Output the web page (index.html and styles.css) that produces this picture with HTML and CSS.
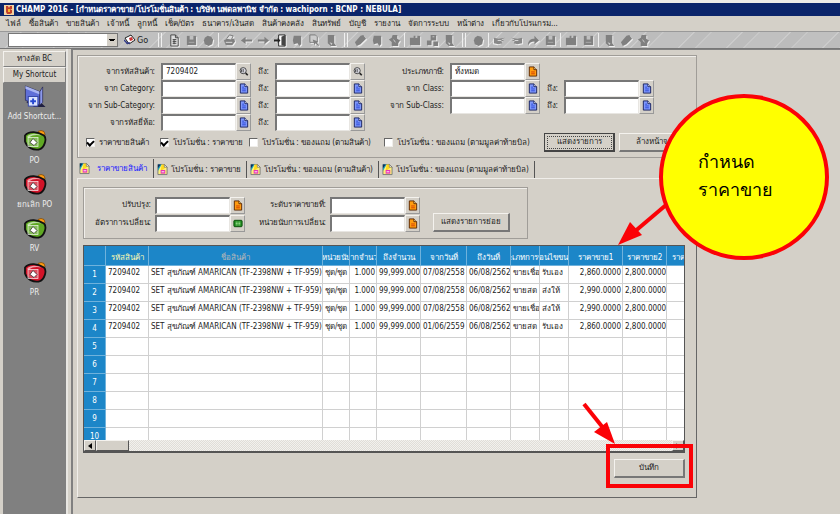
FILE: index.html
```html
<!DOCTYPE html>
<html lang="th">
<head>
<meta charset="UTF-8">
<title>CHAMP 2016</title>
<link rel="stylesheet" href="styles.css">
</head>
<body>

<svg class="defs" width="0" height="0">
  <symbol id="i-doc" viewBox="0 0 10 12"><path d="M1 1h5l3 3v7H1z" fill="#7f98fa" stroke="#16205e"/><path d="M6 1v3h3" fill="#fff" stroke="#16205e"/><path d="M3 4.500h2M3 6.500h4M3 8.500h4" stroke="#2b47d8"/></symbol>
  <symbol id="i-orange" viewBox="0 0 10 12"><path d="M1 1h5l3 3v7H1z" fill="#ff9c10" stroke="#5a2500"/><path d="M6 1v3h3" fill="#ffe9a0" stroke="#5a2500"/><path d="M3 6.500h4M3 8.500h4" stroke="#d13c00"/></symbol>
  <symbol id="i-green" viewBox="0 0 10 12"><rect x=".5" y="2.500" width="9" height="7" rx="1" fill="#1d8a1d" stroke="#0b4b0b"/><path d="M2.500 4.500h5M2.500 6h5M2.500 7.500h5" stroke="#b5f0a5" stroke-dasharray="1.200 .7"/></symbol>
  <symbol id="i-find" viewBox="0 0 12 12"><circle cx="5" cy="5" r="3.700" fill="#d8d8e0" stroke="#333"/><path d="M3 3.500v3M5 3v4" stroke="#333"/><path d="M8 8l2.500 2.500" stroke="#222" stroke-width="2"/></symbol>
  <symbol id="i-tab" viewBox="0 0 12 13"><path d="M1 1h7l3 3v8H1z" fill="#fff27a" stroke="#777"/><path d="M1 1h4L1 8z" fill="#18a0b8"/><path d="M1 1h3L1 5z" fill="#0c2c60"/><path d="M5 1h3l2 3-6 4z" fill="#ffd91c"/><path d="M8 1l3 3H8z" fill="#fff" stroke="#555" stroke-width=".6"/><rect x="4" y="7" width="5" height="4" fill="#e834b8"/><path d="M5 9h3" stroke="#fff"/></symbol>
  <symbol id="i-champ" viewBox="0 0 10 10"><rect width="10" height="10" fill="#f3d2a0"/><path d="M2 1h2l1 2 1-2h2v3L6 5h2v3L6 9H3L2 7z" fill="#c2402a"/><path d="M4 4h2v3H4z" fill="#f6b42c"/></symbol>
  <symbol id="i-go" viewBox="0 0 12 12"><path d="M1 4l6-3 4 5-6 4z" fill="#fff" stroke="#222"/><path d="M5 4l3-1 1 3-3 1z" fill="#c33"/><path d="M0 6l4 4M2 9h4" stroke="#303a88" stroke-width="1.400"/></symbol>
  <symbol id="i-shortcut" viewBox="0 0 24 24"><path d="M17 7l2-3v15l4 4H11l-8-5z" fill="#1f1f40"/><path d="M2 1l15 6v14L2 16z" fill="#5f6fd8" stroke="#22224c" stroke-width=".7"/><path d="M2 1l15 6v3L2 4z" fill="#a9b5f2"/><path d="M17 7l3-5v16l-3 3z" fill="#8b98ec" stroke="#22224c" stroke-width=".7"/><rect x="5" y="12" width="10" height="10" fill="#dbe4ff" stroke="#3446a8"/><path d="M10 14v6M7 17h6" stroke="#2547d0" stroke-width="2"/></symbol>
  <symbol id="i-bag" viewBox="0 0 24 22"><circle cx="18" cy="5" r="4" fill="#ff9d12" stroke="#5a3000" stroke-width=".6"/><path d="M2 6c4-5 13-4 19 0 3 3 1 12-5 14-6 1-12-2-14-8z" fill="currentColor" stroke="#111" stroke-width="1.800"/><path d="M4 7c4-4 11-3 14-1-3-1-9-1-12 2z" fill="#fff" opacity=".6"/><rect x="5" y="8" width="10" height="9" fill="#fff" fill-opacity=".25" stroke="#fff" stroke-opacity=".8" stroke-width=".8"/><path d="M7 13l3-4 4 4-3 3z" fill="#fff" stroke="#222" stroke-width=".7"/></symbol>
  <symbol id="t-page" viewBox="0 0 14 14"><path d="M3 1h5l3 3v9H3z" fill="#ddd" stroke="#444"/><path d="M8 1v3h3M5 6h4M5 8h4M5 10h4M6.500 6v5" fill="none" stroke="#444"/></symbol>
  <symbol id="t-save" viewBox="0 0 14 14"><path d="M2 2h10v10H2z" fill="#808080"/><path d="M5 2h4v4H5z" fill="#c0c0c0"/><path d="M4 9h6" stroke="#aaa"/></symbol>
  <symbol id="t-ball" viewBox="0 0 14 14"><path d="M3 4l3-2 4 1 2 3-1 5-4 2-4-2-1-4z" fill="#808080"/></symbol>
  <symbol id="t-print" viewBox="0 0 14 14"><path d="M1 7l3-2h8l1 3-3 4H3z" fill="#808080"/><path d="M4 5l3-4 4 1-2 4" fill="#ddd" stroke="#777"/><path d="M3 9h7" stroke="#ddd"/></symbol>
  <symbol id="t-left" viewBox="0 0 14 14"><path d="M1 7l5-4v3h7v2H6v3z" fill="#808080"/></symbol>
  <symbol id="t-right" viewBox="0 0 14 14"><path d="M13 7L8 3v3H1v2h7v3z" fill="#808080"/></symbol>
  <symbol id="t-door" viewBox="0 0 14 14"><path d="M5 1h7v12H5z" fill="#fff" stroke="#222"/><path d="M8 3l4-2v12l-4-1z" fill="#444"/><path d="M0 6h4V4l3 3-3 3V8H0z" fill="#222"/></symbol>
  <symbol id="t-tag" viewBox="0 0 14 14"><path d="M3 2h8v9l-2 2-2-3-4 1-1-4z" fill="#808080"/></symbol>
  <symbol id="t-copy" viewBox="0 0 14 14"><path d="M2 1h6l2 2v6H2z" fill="#ccc" stroke="#777"/><path d="M5 6l6 2-2 1 3 3-1 1-3-3-1 2z" fill="#808080"/></symbol>
  <symbol id="t-note" viewBox="0 0 14 14"><path d="M3 1h7v9l2 3H6l-3-3z" fill="#808080"/><path d="M5 9l3 1-1 2z" fill="#ccc"/></symbol>
  <symbol id="t-pen" viewBox="0 0 14 14"><path d="M1 9l6-7 3-1 3 4-6 6-4 2z" fill="#808080"/></symbol>
  <symbol id="t-man" viewBox="0 0 14 14"><path d="M5 1h5v4l3 2-2 3v3H4V9L1 6l3-2z" fill="#808080"/><path d="M6 6l2 3" stroke="#ccc"/></symbol>
  <symbol id="t-box" viewBox="0 0 14 14"><path d="M1 4h4V2h2v2h2V2h3v10H1z" fill="#808080"/></symbol>
  <symbol id="t-tree" viewBox="0 0 14 14"><path d="M5 1h6v6H5zM1 7h5v5H1zM8 8h5v5H8z" fill="#808080"/><path d="M7 3h2" stroke="#ccc"/></symbol>
  <symbol id="t-hand" viewBox="0 0 14 14"><path d="M1 4l7 1 5-1v6l-5 1-4-1 1-2-3-1 3-1z" fill="#888"/><path d="M5 7h4" stroke="#ddd"/></symbol>
  <symbol id="t-jump" viewBox="0 0 14 14"><path d="M1 12c0-5 3-7 7-7V2l5 5-5 4V8c-3 0-5 1-7 4z" fill="#808080"/></symbol>
</svg>

<header class="titlebar">
  <svg class="title-icon"><use href="#i-champ"/></svg>
  <h1>CHAMP 2016 - [กำหนดราคาขาย/โปรโมชั่นสินค้า : บริษัท นพดลพานิช จำกัด : wachiporn : BCNP : NEBULA]</h1>
</header>

<nav class="menubar">
  <a href="#">ไฟล์</a><a href="#">ซื้อสินค้า</a><a href="#">ขายสินค้า</a><a href="#">เจ้าหนี้</a><a href="#">ลูกหนี้</a><a href="#">เช็ค/บัตร</a><a href="#">ธนาคาร/เงินสด</a><a href="#">สินค้าคงคลัง</a><a href="#">สินทรัพย์</a><a href="#">บัญชี</a><a href="#">รายงาน</a><a href="#">จัดการระบบ</a><a href="#">หน้าต่าง</a><a href="#">เกี่ยวกับโปรแกรม...</a>
</nav>

<div class="toolbar">
  <select class="combo" aria-label="Go"><option></option></select>
  <button class="go"><svg><use href="#i-go"/></svg>Go</button>
  <i class="sep wide"></i>
  <button class="tool"><svg><use href="#t-page"/></svg></button>
  <button class="tool"><svg><use href="#t-save"/></svg></button>
  <button class="tool"><svg><use href="#t-ball"/></svg></button>
  <i class="sep"></i>
  <button class="tool"><svg><use href="#t-print"/></svg></button>
  <button class="tool"><svg><use href="#t-left"/></svg></button>
  <button class="tool"><svg><use href="#t-right"/></svg></button>
  <button class="tool"><svg><use href="#t-door"/></svg></button>
  <button class="tool"><svg><use href="#t-tag"/></svg></button>
  <button class="tool"><svg><use href="#t-copy"/></svg></button>
  <button class="tool"><svg><use href="#t-note"/></svg></button>
  <i class="sep wide"></i>
  <button class="tool"><svg><use href="#t-pen"/></svg></button>
  <button class="tool"><svg><use href="#t-tag"/></svg></button>
  <button class="tool"><svg><use href="#t-man"/></svg></button>
  <i class="sep"></i>
  <button class="tool"><svg><use href="#t-box"/></svg></button>
  <button class="tool"><svg><use href="#t-tree"/></svg></button>
  <button class="tool"><svg><use href="#t-note"/></svg></button>
  <i class="sep wide"></i>
  <button class="tool"><svg><use href="#t-ball"/></svg></button>
  <i class="sep"></i>
  <button class="tool"><svg class="flip"><use href="#t-hand"/></svg></button>
  <button class="tool"><svg><use href="#t-hand"/></svg></button>
  <button class="tool"><svg><use href="#t-jump"/></svg></button>
  <button class="tool"><svg><use href="#t-save"/></svg></button>
  <i class="sep"></i>
  <button class="tool"><svg><use href="#t-box"/></svg></button>
  <button class="tool"><svg><use href="#t-save"/></svg></button>
  <i class="sep"></i>
  <button class="tool"><svg><use href="#t-note"/></svg></button>
  <button class="tool"><svg><use href="#t-pen"/></svg></button>
  <button class="tool"><svg><use href="#t-man"/></svg></button>
</div>

<div class="workspace">
  <aside class="sidebar">
    <button class="side-head">ทางลัด BC</button>
    <button class="side-head">My Shortcut</button>
    <div class="shortcuts">
      <a href="#"><svg><use href="#i-shortcut"/></svg>Add Shortcut...</a>
      <a href="#"><svg class="green"><use href="#i-bag"/></svg>PO</a>
      <a href="#"><svg class="red"><use href="#i-bag"/></svg>ยกเลิก PO</a>
      <a href="#"><svg class="green"><use href="#i-bag"/></svg>RV</a>
      <a href="#"><svg class="red"><use href="#i-bag"/></svg>PR</a>
    </div>
  </aside>

  <main class="window">
    <section class="group filters">
      <div class="filter-grid">
        <label for="item1">จากรหัสสินค้า:</label>
        <div class="field"><input id="item1" type="text" value="7209402"><button><svg><use href="#i-find"/></svg></button></div>
        <label for="item2">ถึง:</label>
        <div class="field"><input id="item2" type="text"><button><svg><use href="#i-find"/></svg></button></div>
        <label for="tax">ประเภทภาษี:</label>
        <div class="field"><input id="tax" type="text" value="ทั้งหมด"><button><svg><use href="#i-orange"/></svg></button></div>
        <span></span><span></span>

        <label for="cat1">จาก Category:</label>
        <div class="field"><input id="cat1" type="text"><button><svg><use href="#i-doc"/></svg></button></div>
        <label for="cat2">ถึง:</label>
        <div class="field"><input id="cat2" type="text"><button><svg><use href="#i-doc"/></svg></button></div>
        <label for="class1">จาก Class:</label>
        <div class="field"><input id="class1" type="text"><button><svg><use href="#i-doc"/></svg></button></div>
        <label for="class2">ถึง:</label>
        <div class="field"><input id="class2" type="text"><button><svg><use href="#i-doc"/></svg></button></div>

        <label for="sub1">จาก Sub-Category:</label>
        <div class="field"><input id="sub1" type="text"><button><svg><use href="#i-doc"/></svg></button></div>
        <label for="sub2">ถึง:</label>
        <div class="field"><input id="sub2" type="text"><button><svg><use href="#i-doc"/></svg></button></div>
        <label for="subc1">จาก Sub-Class:</label>
        <div class="field"><input id="subc1" type="text"><button><svg><use href="#i-doc"/></svg></button></div>
        <label for="subc2">ถึง:</label>
        <div class="field"><input id="subc2" type="text"><button><svg><use href="#i-doc"/></svg></button></div>

        <label for="brand1">จากรหัสยี่ห้อ:</label>
        <div class="field"><input id="brand1" type="text"><button><svg><use href="#i-doc"/></svg></button></div>
        <label for="brand2">ถึง:</label>
        <div class="field"><input id="brand2" type="text"><button><svg><use href="#i-doc"/></svg></button></div>
      </div>
      <div class="checks">
        <label><input type="checkbox" checked>ราคาขายสินค้า</label>
        <label><input type="checkbox" checked>โปรโมชั่น : ราคาขาย</label>
        <label><input type="checkbox">โปรโมชั่น : ของแถม (ตามสินค้า)</label>
        <label><input type="checkbox">โปรโมชั่น : ของแถม (ตามมูลค่าท้ายบิล)</label>
        <div class="check-actions">
          <button class="btn default">แสดงรายการ</button>
          <button class="btn">ล้างหน้าจอ</button>
        </div>
      </div>
    </section>

    <div class="tabs">
      <button class="tab active"><svg><use href="#i-tab"/></svg>ราคาขายสินค้า</button>
      <button class="tab"><svg><use href="#i-tab"/></svg>โปรโมชั่น : ราคาขาย</button>
      <button class="tab"><svg><use href="#i-tab"/></svg>โปรโมชั่น : ของแถม (ตามสินค้า)</button>
      <button class="tab"><svg><use href="#i-tab"/></svg>โปรโมชั่น : ของแถม (ตามมูลค่าท้ายบิล)</button>
    </div>

    <section class="tab-page">
      <div class="group options">
        <div class="option-grid">
          <label for="adj">ปรับปรุง:</label>
          <div class="field"><input id="adj" type="text"><button><svg><use href="#i-orange"/></svg></button></div>
          <label for="level">ระดับราคาขายที่:</label>
          <div class="field"><input id="level" type="text"><button><svg><use href="#i-orange"/></svg></button></div>
          <label for="rate">อัตราการเปลี่ยน:</label>
          <div class="field"><input id="rate" type="text"><button><svg><use href="#i-green"/></svg></button></div>
          <label for="unit">หน่วยนับการเปลี่ยน:</label>
          <div class="field"><input id="unit" type="text"><button><svg><use href="#i-orange"/></svg></button></div>
        </div>
        <button class="btn detail">แสดงรายการย่อย</button>
      </div>

      <div class="sheet">
        <div class="sheet-view">
          <table>
            <colgroup><col class="c-no"><col class="c-code"><col class="c-name"><col class="c-unit"><col class="c-unit"><col class="c-money"><col class="c-date"><col class="c-money"><col class="c-type"><col class="c-type"><col class="c-price"><col class="c-money"><col class="c-date"></colgroup>
            <thead>
              <tr><th></th><th class="hot"><span>รหัสสินค้า</span></th><th class="dim"><span>ชื่อสินค้า</span></th><th><span>หน่วยนับ</span></th><th><span>จากจำนวน</span></th><th><span>ถึงจำนวน</span></th><th><span>จากวันที่</span></th><th><span>ถึงวันที่</span></th><th><span>ประเภทการขาย</span></th><th><span>เงื่อนไขขนส่ง</span></th><th><span>ราคาขาย1</span></th><th><span>ราคาขาย2</span></th><th><span>ราคาขาย3</span></th></tr>
            </thead>
            <tbody>
              <tr><th>1</th><td>7209402</td><td>SET สุขภัณฑ์ AMARICAN (TF-2398NW + TF-959)</td><td>ชุด/ชุด</td><td class="num">1.000</td><td class="num">99,999.000</td><td>07/08/2558</td><td>06/08/2562</td><td>ขายเชื่อ</td><td>รับเอง</td><td class="num">2,860.0000</td><td>2,800.0000</td><td></td></tr>
              <tr><th>2</th><td>7209402</td><td>SET สุขภัณฑ์ AMARICAN (TF-2398NW + TF-959)</td><td>ชุด/ชุด</td><td class="num">1.000</td><td class="num">99,999.000</td><td>07/08/2558</td><td>06/08/2562</td><td>ขายสด</td><td>ส่งให้</td><td class="num">2,990.0000</td><td>2,800.0000</td><td></td></tr>
              <tr><th>3</th><td>7209402</td><td>SET สุขภัณฑ์ AMARICAN (TF-2398NW + TF-959)</td><td>ชุด/ชุด</td><td class="num">1.000</td><td class="num">99,999.000</td><td>07/08/2558</td><td>06/08/2562</td><td>ขายเชื่อ</td><td>ส่งให้</td><td class="num">2,990.0000</td><td>2,800.0000</td><td></td></tr>
              <tr><th>4</th><td>7209402</td><td>SET สุขภัณฑ์ AMARICAN (TF-2398NW + TF-959)</td><td>ชุด/ชุด</td><td class="num">1.000</td><td class="num">99,999.000</td><td>01/06/2559</td><td>06/08/2562</td><td>ขายสด</td><td>รับเอง</td><td class="num">2,860.0000</td><td>2,800.0000</td><td></td></tr>
              <tr><th>5</th><td></td><td></td><td></td><td></td><td></td><td></td><td></td><td></td><td></td><td></td><td></td><td></td></tr>
              <tr><th>6</th><td></td><td></td><td></td><td></td><td></td><td></td><td></td><td></td><td></td><td></td><td></td><td></td></tr>
              <tr><th>7</th><td></td><td></td><td></td><td></td><td></td><td></td><td></td><td></td><td></td><td></td><td></td><td></td></tr>
              <tr><th>8</th><td></td><td></td><td></td><td></td><td></td><td></td><td></td><td></td><td></td><td></td><td></td><td></td></tr>
              <tr><th>9</th><td></td><td></td><td></td><td></td><td></td><td></td><td></td><td></td><td></td><td></td><td></td><td></td></tr>
              <tr><th>10</th><td></td><td></td><td></td><td></td><td></td><td></td><td></td><td></td><td></td><td></td><td></td><td></td></tr>
            </tbody>
          </table>
        </div>
        <div class="scrollbar">
          <button class="arrow" aria-label="left"><svg viewBox="0 0 6 6"><path d="M5 0v6L1 3z"/></svg></button>
          <i class="thumb"></i>
          <button class="arrow end" aria-label="right"><svg viewBox="0 0 6 6"><path d="M1 0v6l4-3z" fill="#808080"/></svg></button>
        </div>
      </div>

      <div class="actions">
        <div class="save-wrap">
          <button class="btn">บันทึก</button>
          <div class="highlight"></div>
          <svg class="save-arrow" viewBox="0 0 36 44"><path d="M2 2l20 25" stroke="#fb0207" stroke-width="4"/><path d="M33 42L12 30l13-10z" fill="#fb0207"/></svg>
        </div>
      </div>
    </section>
  </main>
</div>

<div class="callout">
  <p>กำหนด<br>ราคาขาย</p>
  <svg class="callout-arrow" viewBox="0 0 52 46"><path d="M49 3L16 31" stroke="#fb0207" stroke-width="4"/><path d="M1 43l12-23 12 13z" fill="#fb0207"/></svg>
</div>

</body>
</html>
```

FILE: styles.css
```css
* {
  box-sizing: border-box;
}

body {
  margin: 0;
  min-height: 100vh;
  display: flex;
  flex-direction: column;
  background-color: #d4d0c8;
  color: #222;
  font-family: "DejaVu Sans Condensed", "DejaVu Sans", sans-serif;
  font-size: 8px;
  line-height: 12px;
  overflow: hidden;
}

button, input, select {
  font: inherit;
  color: inherit;
  margin: 0;
  padding: 0;
}

button {
  display: flex;
  align-items: center;
  justify-content: center;
  white-space: nowrap;
  background: none;
  border: 0;
}

a {
  color: inherit;
  text-decoration: none;
}

svg {
  flex: none;
}

.defs {
  position: absolute;
}

/* title, menu, toolbar */

.titlebar {
  display: flex;
  align-items: center;
  gap: 2px;
  height: 16px;
  padding: 0 4px;
  border-top: 3px solid #eceae6;
  background-color: #0a246a;
  color: #fff;
}

.titlebar h1 {
  margin: 0;
  font-size: 8px;
  line-height: 12px;
  white-space: nowrap;
}

.title-icon {
  width: 10px;
  height: 10px;
}

.menubar {
  display: flex;
  align-items: center;
  gap: 8px;
  height: 15px;
  padding: 0 6px;
  white-space: nowrap;
}

.toolbar {
  display: flex;
  align-items: center;
  height: 18px;
  padding-left: 8px;
  border-top: 1px solid #999;
  border-bottom: 1px solid #777;
  background: repeating-linear-gradient(135deg, #c0c0c0 0 14px, #d2d2d2 15px, #bcbcbc 16px 26px, #cccccc 27px, #c0c0c0 28px 34px);
}

.combo {
  width: 110px;
  height: 14px;
  appearance: none;
  border: 1px solid #777;
  border-radius: 0;
  background: linear-gradient(45deg, transparent 50%, #000 50%) right 5px center / 3px 3px no-repeat,
    linear-gradient(-45deg, transparent 50%, #000 50%) right 2px center / 3px 3px no-repeat,
    linear-gradient(#d4d0c8, #d4d0c8) right / 10px 100% no-repeat #fff;
}

.go {
  gap: 1px;
  width: 36px;
  font-size: 9px;
}

.go svg {
  width: 12px;
  height: 12px;
}

.tool {
  width: 17px;
  height: 16px;
}

.tool svg {
  width: 13px;
  height: 13px;
  filter: drop-shadow(1px 1px 0 #eee);
}

.flip {
  transform: scaleX(-1);
}

.sep {
  width: 1px;
  height: 14px;
  margin: 0 2px 0 1px;
  background-color: #eee;
}

.sep.wide {
  width: 4px;
  margin: 0 4px;
  border: solid #f0f0f0;
  border-width: 0 1px;
  background: none;
}

/* sidebar */

.workspace {
  flex: 1;
  display: flex;
}

.sidebar {
  flex: none;
  display: flex;
  flex-direction: column;
  width: 68px;
  padding: 2px 0 0 3px;
  border-right: 2px solid #e8e6e2;
}

.side-head {
  width: 100%;
  height: 16px;
  border: 1px solid;
  border-color: #f4f2ee #808080 #808080 #f4f2ee;
}

.shortcuts {
  flex: 1;
  display: flex;
  flex-direction: column;
  gap: 6px;
  padding-top: 2px;
  background-color: #808080;
  color: #eee;
}

.shortcuts a {
  display: flex;
  flex-direction: column;
  align-items: center;
  gap: 3px;
  white-space: nowrap;
}

.shortcuts svg {
  width: 24px;
  height: 23px;
}

.green {
  color: #5fa823;
}

.red {
  color: #d21328;
}

/* main window */

.window {
  flex: 1;
  min-width: 0;
  margin-left: 3px;
  padding: 5px 143px 15px 4px;
  border-left: 2px solid #808080;
  border-top: 1px solid #808080;
}

.group {
  border: 1px solid #a09d98;
  box-shadow: inset 1px 1px 0 #f0eeea;
}

.filters {
  height: 103px;
  padding-top: 7px;
}

.filter-grid {
  display: grid;
  grid-template-columns: 77px 90px 12px 90px 73px 90px 12px 90px;
  grid-auto-rows: 17px;
  column-gap: 6px;
  align-items: center;
  text-align: right;
  white-space: nowrap;
}

.field {
  display: flex;
  height: 17px;
}

.field input {
  flex: 1;
  min-width: 0;
  padding: 0 3px;
  border: 1px solid;
  border-width: 2px 1px 1px 2px;
  border-color: #777 #e8e6e2 #e8e6e2 #777;
  background-color: #fff;
}

.field button {
  width: 15px;
  border: 1px solid;
  border-color: #f4f2ee #999 #999 #f4f2ee;
}

.field svg {
  width: 10px;
  height: 11px;
}

.checks {
  display: grid;
  grid-template-columns: 74px 89px 135px 160px auto;
  align-items: center;
  margin-top: 2px;
  padding-left: 8px;
  white-space: nowrap;
}

.checks label {
  display: flex;
  align-items: center;
  gap: 4px;
}

.checks input {
  appearance: none;
  display: grid;
  place-items: center;
  width: 9px;
  height: 9px;
  border: 1px solid;
  border-color: #666 #f0eeea #f0eeea #666;
  background-color: #fff;
}

.checks input:checked::before {
  content: "";
  width: 5px;
  height: 3px;
  border: solid #000;
  border-width: 0 0 2px 2px;
  rotate: -45deg;
}

.check-actions {
  display: flex;
  gap: 4px;
}

.btn {
  width: 71px;
  height: 19px;
  border: 1px solid;
  border-width: 1px 2px 2px 1px;
  border-color: #f4f2ee #777 #777 #f4f2ee;
  background-color: #d4d0c8;
}

.btn.default {
  border: 1px solid #444;
  border-width: 1px 2px 2px 1px;
  outline: 1px dotted #444;
  outline-offset: -4px;
}

/* tabs */

.tabs {
  display: flex;
  align-items: flex-end;
  height: 20px;
  padding-left: 2px;
}

.tab {
  gap: 3px;
  height: 17px;
  padding: 0 5px 0 3px;
  border-right: 1px solid #555;
}

.tab.active {
  height: 19px;
  padding: 0 6px 0 0;
  gap: 7px;
  color: #1a1aff;
}

.tab svg {
  width: 11px;
  height: 13px;
}

.tab-page {
  padding: 8px 11px 19px 5px;
  border: 1px solid #666;
  border-color: #f0eeea #666 #666 #f0eeea;
}

.options {
  display: flex;
  align-items: flex-end;
  width: 445px;
  height: 52px;
  padding: 0 0 6px;
}

.option-grid {
  display: grid;
  grid-template-columns: 67px 90px 77px 90px;
  grid-auto-rows: 18px;
  column-gap: 4px;
  align-items: center;
  text-align: right;
  white-space: nowrap;
}

.btn.detail {
  width: 77px;
  margin-left: 13px;
}

/* price table */

.sheet {
  margin-top: 6px;
  border: 1px solid #555;
  border-bottom-width: 2px;
}

.sheet-view {
  height: 194px;
  overflow: hidden;
  background-color: #fff;
}

.sheet table {
  width: 626px;
  border-collapse: separate;
  border-spacing: 0;
  table-layout: fixed;
}

.c-no { width: 22px; }
.c-code { width: 43px; }
.c-name { width: 174px; }
.c-unit { width: 27px; }
.c-money { width: 44px; }
.c-date { width: 46px; }
.c-type { width: 29px; }
.c-price { width: 54px; }

.sheet th,
.sheet td {
  height: 18px;
  padding: 0 2px;
  border-right: 1px solid #d0d0d0;
  border-bottom: 1px solid #d0d0d0;
  overflow: hidden;
  white-space: nowrap;
}

.sheet td {
  padding-bottom: 4px;
  line-height: 12px;
}

.sheet th {
  background-color: #1c86c8;
  border-color: #6fb2dc;
  color: #fff;
  font-weight: normal;
}

.sheet thead th {
  height: 20px;
  padding: 5px 0 0;
}

.sheet thead span {
  display: flex;
  justify-content: center;
  overflow: hidden;
}

.sheet th.hot {
  color: #fffbb0;
}

.sheet th.dim {
  color: #b8b8b8;
}

.sheet .num {
  padding-right: 1px;
  text-align: right;
}

.scrollbar {
  display: flex;
  height: 11px;
  background: repeating-conic-gradient(#e0ddd8 0 25%, #f2f1ee 0 50%) 0 0 / 2px 2px;
}

.arrow,
.thumb {
  width: 12px;
  border: 1px solid;
  border-color: #f4f2ee #555 #555 #f4f2ee;
  background-color: #d4d0c8;
}

.thumb {
  width: 33px;
}

.arrow svg {
  width: 6px;
  height: 6px;
}

.arrow.end {
  margin-left: auto;
}

.actions {
  display: flex;
  justify-content: flex-end;
  padding-top: 6px;
}

/* marks drawn over the form */

.save-wrap {
  position: relative;
}

.highlight {
  position: absolute;
  inset: -15px -8px -10px -8px;
  border: 4px solid #fb0207;
}

.save-arrow {
  position: absolute;
  right: 67px;
  bottom: 32px;
  width: 36px;
  height: 44px;
}

.callout {
  position: absolute;
  left: 659px;
  top: 94px;
  width: 170px;
  height: 166px;
  padding: 50px 0 0 35px;
  border: 4px solid #fb0207;
  border-radius: 50%;
  background-color: #ff0;
  color: #000;
  font-size: 18px;
  line-height: 28px;
}

.callout p {
  margin: 0;
}

.callout-arrow {
  position: absolute;
  left: -46px;
  top: 104px;
  width: 52px;
  height: 46px;
}
```
